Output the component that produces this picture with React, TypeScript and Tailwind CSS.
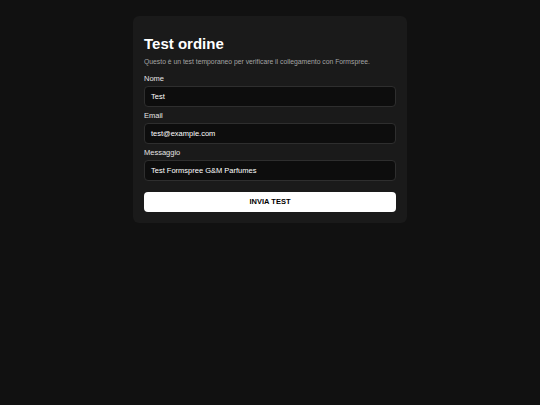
export default function App() {
  return (
    <div
      className="min-h-[405px] w-full bg-[#111111] text-white"
      style={{ fontFamily: '"Liberation Sans", Arial, sans-serif' }}
    >
      <div className="flex justify-center pt-[16px]">
        <div className="w-[274px] rounded-[6px] bg-[#1a1a1a] px-[11px] pt-[19px] pb-[11px]">
          <h1 className="text-[15px] font-bold leading-[18px]">Test ordine</h1>
          <p className="mt-[4px] text-[6.8px] leading-[9px] text-[#a3a3a3]">
            Questo è un test temporaneo per verificare il collegamento con Formspree.
          </p>
          <form className="mt-[8px] flex flex-col" onSubmit={(e) => e.preventDefault()}>
            <label className="text-[7.5px] leading-[9px] text-[#e5e5e5]">Nome</label>
            <div className="mt-[3px] flex h-[21px] items-center rounded-[4px] border border-[#2e2e2e] bg-[#0d0d0d] px-[6px] text-[7.5px]">
              Test
            </div>
            <label className="mt-[4px] text-[7.5px] leading-[9px] text-[#e5e5e5]">Email</label>
            <div className="mt-[3px] flex h-[21px] items-center rounded-[4px] border border-[#2e2e2e] bg-[#0d0d0d] px-[6px] text-[7.5px]">
              test@example.com
            </div>
            <label className="mt-[4px] text-[7.5px] leading-[9px] text-[#e5e5e5]">Messaggio</label>
            <div className="mt-[3px] flex h-[21px] items-center rounded-[4px] border border-[#2e2e2e] bg-[#0d0d0d] px-[6px] text-[7.5px]">
              Test Formspree G&amp;M Parfumes
            </div>
            <button
              type="submit"
              className="mt-[11px] h-[20px] rounded-[4px] bg-white text-[7.5px] font-bold text-black"
            >
              INVIA TEST
            </button>
          </form>
        </div>
      </div>
    </div>
  );
}
